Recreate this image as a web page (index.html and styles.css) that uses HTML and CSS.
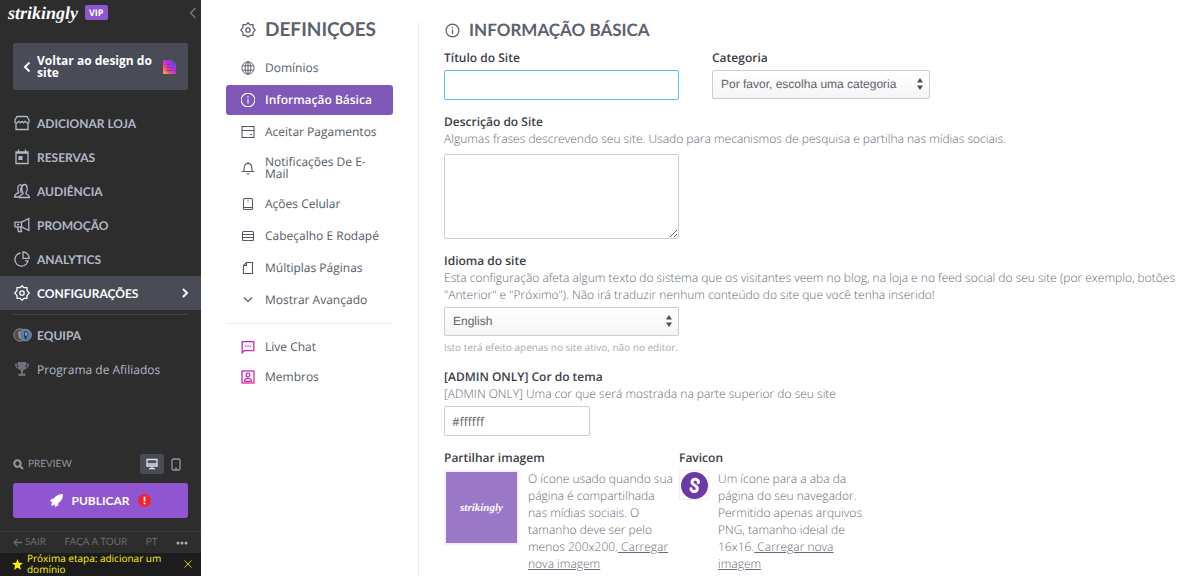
FILE: index.html
```html
<!DOCTYPE html>
<html lang="pt">
<head>
<meta charset="utf-8">
<meta name="viewport" content="width=device-width, initial-scale=1">
<title>Definições - Informação Básica</title>
<link rel="stylesheet" href="styles.css">
</head>
<body>
<svg class="defs" width="0" height="0" aria-hidden="true">
  <defs>
    <linearGradient id="pink" x1="0" y1="0" x2="1" y2="1"><stop offset="0" stop-color="#a32be0"/><stop offset="1" stop-color="#f02a8c"/></linearGradient>
    <linearGradient id="insta" x1="0" y1="1" x2="1" y2="0"><stop offset="0" stop-color="#ffb02e"/><stop offset=".35" stop-color="#f0418a"/><stop offset=".6" stop-color="#b32be8"/><stop offset="1" stop-color="#3f6be0"/></linearGradient>
    <symbol id="gear" viewBox="0 0 16 16"><path d="M8 .8 9.9 2.7 12.9 2.6 13.1 5.6 15.2 8 13.1 10.4 12.9 13.4 9.9 13.3 8 15.2 6.1 13.3 3.1 13.4 2.9 10.4.8 8 2.9 5.6 3.1 2.6 6.1 2.7Z"/><circle cx="8" cy="8" r="2.2"/></symbol>
    <symbol id="info" viewBox="0 0 16 16"><circle cx="8" cy="8" r="6.8"/><path d="M8 7v4.6M8 4.2v1.5"/></symbol>
  </defs>
</svg>
<div class="app">
  <aside class="sidebar">
    <header class="brand">
      <span class="logo">strikingly</span>
      <span class="vip">VIP</span>
      <button class="collapse" aria-label="Recolher menu"><svg class="icon" width="8" height="12" viewBox="0 0 8 12"><path d="M6.5 1 1.5 6l5 5"/></svg></button>
    </header>
    <button class="back">
      <svg class="icon bold" width="8" height="12" viewBox="0 0 8 12"><path d="M6.5 1.5 2 6l4.500 4.500"/></svg>
      <span class="back-text">Voltar ao design do site</span>
      <svg width="13" height="14" viewBox="0 0 13 14"><path d="M0 0h9l4 4v10H0z" fill="url(#insta)"/><path d="M3.500 4.500h3M3.500 7.500h6M3.500 10.500h6M9 0v4h4" fill="none" stroke="#5b4a9a"/></svg>
    </button>
    <nav class="menu">
      <a class="menu-item" href="#"><svg class="icon" width="16" height="16" viewBox="0 0 16 16"><path d="M3 1.500h10L15 5v2.300q-1.200 1.500-2.700 0l-1.300-1-1.500 1.500-1.500-1.500-1.500 1.500L5 6.300l-1.300 1Q2.200 8.800 1 7.300V5ZM2 8.500v6h12v-6"/></svg>ADICIONAR LOJA</a>
      <a class="menu-item" href="#"><svg class="icon" width="16" height="16" viewBox="0 0 16 16"><path d="M2 3h12v11.500H2zM2 4.200h12M4.500.5V3M11.500.5V3"/><path d="M4.500 7h4v4h-4z" fill="currentColor" stroke="none"/></svg>RESERVAS</a>
      <a class="menu-item" href="#"><svg class="icon" width="16" height="16" viewBox="0 0 16 16"><path d="M5.500 14.500h10q0-2.500-3.500-3.500v-1.500c1.500-1.500 2-8-1.500-8S7.500 8 9 9.500V11q-3.500 1-3.500 3.500ZM8 2.500C4.500.5 3 4 4.300 8.300L4.500 10Q.7 11 .5 14h5M8 3.500C6.300 5 6.300 8.500 7.500 10"/></svg>AUDIÊNCIA</a>
      <a class="menu-item" href="#"><svg class="icon" width="16" height="16" viewBox="0 0 16 16"><path d="M1 5.200h6.500v4.600H1zM7.500 5.200 14.800 1.500v12L7.500 9.800M3.500 10l1 4.500h3L6.500 10M3 7.500h2"/></svg>PROMOÇÃO</a>
      <a class="menu-item" href="#"><svg class="icon" width="16" height="16" viewBox="0 0 16 16"><path d="M6.500 2A6.600 6.600 0 1 0 14 9.800H11M9 1v6.300h6.200C15.200 3.800 12.500 1 9 1Z"/></svg>ANALYTICS</a>
      <a class="menu-item active" href="#"><svg class="icon" width="16" height="16"><use href="#gear"/></svg>CONFIGURAÇÕES<svg class="icon bold next" width="8" height="12" viewBox="0 0 8 12"><path d="M2 2l4 4-4 4"/></svg></a>
    </nav>
    <nav class="menu secondary">
      <a class="menu-item" href="#"><svg class="team" width="19" height="14" viewBox="0 0 19 14"><circle cx="7" cy="7" r="6.200" fill="#4f4a49" stroke="#8b919e"/><path d="M5 4.500Q7 2 9 5v4L6 11Z" fill="#b08b74"/><circle cx="12.500" cy="7" r="5.800" fill="#5478a8" stroke="#8b919e"/><path d="M11 4q2-2 4 1l-1 4-1 3-2-3Z" fill="#263f68"/><path d="M12 4.500h2v3h-2z" fill="#b39b98"/></svg>EQUIPA</a>
      <a class="menu-item plain" href="#"><svg width="16" height="16" viewBox="0 0 16 16"><path d="M4 1h8v1.500h3C15 6 13.300 7.500 11 8.300L9 10v2.500h2.500V15h-7v-2.500H7V10L5 8.300C2.700 7.500 1 6 1 2.500h3ZM2.400 3.700q.2 2 2 3L4 3.700ZM12 3.700l-.4 3q1.800-1 2-3Z" fill="#6c717c" fill-rule="evenodd"/></svg>Programa de Afiliados</a>
    </nav>
    <div class="sidebar-end">
      <div class="preview">
        <a class="preview-link" href="#"><svg class="icon bold" width="11" height="11" viewBox="0 0 11 11"><circle cx="4.500" cy="4.500" r="3.200"/><path d="M7 7l3 3"/></svg>PREVIEW</a>
        <button class="device on" aria-label="Computador"><svg class="icon" width="12" height="12" viewBox="0 0 12 12"><path d="M1 1.500h10v6.500H1zM1 6h10M6 8v2.500M3 10.700h6"/></svg></button>
        <button class="device" aria-label="Celular"><svg class="icon" width="10" height="13" viewBox="0 0 10 13"><rect x="1" y="1" width="8" height="11" rx="1.500"/><path d="M4 10.300h2"/></svg></button>
      </div>
      <button class="publish"><svg width="13" height="13" viewBox="0 0 13 13"><path d="M13 0C8.500 0 6 1.500 4 4.500L1.500 5 0 7.500l2.500.3L1 10.500 2 12l3-1.500.2 2.500L8 11.500l.5-2.700C11.500 7 13 4.500 13 0Z" fill="#fff"/></svg>PUBLICAR<svg width="13" height="13" viewBox="0 0 13 13" aria-label="Aviso"><circle cx="6.500" cy="6.500" r="6.500" fill="#f5222d"/><path d="M6.500 2.700v4.500M6.500 8.600v1.700" stroke="#fff" stroke-width="1.800"/></svg></button>
      <div class="links">
        <a href="#"><svg class="icon" width="9" height="9" viewBox="0 0 9 9"><path d="M9 4.500H1M4.500 1 1 4.500 4.500 8"/></svg>SAIR</a>
        <a href="#">FAÇA A TOUR</a>
        <a href="#">PT</a>
        <button aria-label="Mais"><svg width="12" height="4" viewBox="0 0 12 4" fill="#a9afbd"><circle cx="2" cy="2" r="1.500"/><circle cx="6" cy="2" r="1.500"/><circle cx="10" cy="2" r="1.500"/></svg></button>
      </div>
      <div class="tip">
        <svg width="11" height="11" viewBox="0 0 12 12"><path d="M6 0l1.600 4.200 4.400.2-3.400 2.800L9.700 12 6 9.300 2.300 12l1.100-4.800L0 4.400l4.400-.2Z" fill="#fff200"/></svg>
        <a href="#">Próxima etapa: adicionar um domínio</a>
        <button aria-label="Fechar"><svg width="8" height="8" viewBox="0 0 8 8"><path d="M.5.5l7 7M7.500.5l-7 7" stroke="#cfc51c"/></svg></button>
      </div>
    </div>
  </aside>

  <section class="settings">
    <h1 class="settings-title"><svg class="icon" width="16" height="16"><use href="#gear"/></svg>DEFINIÇOES</h1>
    <nav class="tabs">
      <a class="tab" href="#"><svg class="icon" width="14" height="14" viewBox="0 0 16 16"><circle cx="8" cy="8" r="7"/><ellipse cx="8" cy="8" rx="3.200" ry="7"/><path d="M8 1v14M1.500 5.500h13M1.500 10.500h13"/></svg>Domínios</a>
      <a class="tab current" href="#"><svg class="icon" width="14" height="14" viewBox="1 1 14 14"><use href="#info" width="16" height="16"/></svg>Informação Básica</a>
      <a class="tab" href="#"><svg class="icon" width="14" height="14" viewBox="0 0 14 14"><path d="M1 1.500h12v11H1zM1 5.500h12M9 9.500h2"/></svg>Aceitar Pagamentos</a>
      <a class="tab" href="#"><svg class="icon" width="14" height="14" viewBox="0 0 14 14"><path d="M.7 10.500h12.600M2.500 10.500Q3.300 9.500 3.300 6.500C3.300 1 10.700 1 10.700 6.500Q10.700 9.500 11.500 10.500M7 1v1.300M5.500 13h3"/></svg><span>Notificações De E-Mail</span></a>
      <a class="tab" href="#"><svg class="icon" width="14" height="14" viewBox="0 0 14 14"><rect x="2.500" y="1.500" width="9" height="11" rx="1"/><path d="M2.500 10.500h9M6.300 4h1.400"/></svg>Ações Celular</a>
      <a class="tab" href="#"><svg class="icon" width="14" height="14" viewBox="0 0 14 14"><rect x="1.500" y="2.500" width="11" height="9" rx="1"/><path d="M1.500 5.500h11M1.500 8.500h11"/></svg>Cabeçalho E Rodapé</a>
      <a class="tab" href="#"><svg class="icon" width="14" height="14" viewBox="0 0 14 14"><path d="M5.500 1.500h6v11h-9v-8ZM5.500 1.500v3h-3"/></svg>Múltiplas Páginas</a>
      <a class="tab" href="#"><svg class="icon" width="14" height="14" viewBox="0 0 14 14"><path d="M3 4.500l4 4 4-4"/></svg>Mostrar Avançado</a>
    </nav>
    <nav class="tabs extra">
      <a class="tab" href="#"><svg width="14" height="14" viewBox="0 0 14 14" fill="none" stroke="url(#pink)" stroke-width="1.300"><path d="M1.200 12.800V1.700h11.600v9H3.300ZM3.800 6.200h1.400M6.300 6.200h1.400M8.800 6.200h1.400"/></svg>Live Chat</a>
      <a class="tab" href="#"><svg width="14" height="14" viewBox="0 0 14 14" fill="none" stroke="url(#pink)" stroke-width="1.300"><rect x="1" y="1" width="12" height="12"/><circle cx="7" cy="5" r="1.900"/><path d="M3.500 11.300h7Q10.500 8.300 7 8.300T3.500 11.300Z"/></svg>Membros</a>
    </nav>
  </section>

  <main class="content">
    <h2 class="content-title"><svg class="icon" width="15" height="15"><use href="#info"/></svg>INFORMAÇÃO BÁSICA</h2>
    <form class="form">
      <div class="pair">
        <div class="field medium">
          <label for="title">Título do Site</label>
          <input class="focused" id="title" type="text">
        </div>
        <div class="field category">
          <label for="category">Categoria</label>
          <div class="select"><select id="category"><option>Por favor, escolha uma categoria</option></select><svg class="arrows" width="6" height="12" viewBox="0 0 6 12"><path d="M3 0l3 4.500H0zM3 12l3-4.500H0z"/></svg></div>
        </div>
      </div>
      <div class="field">
        <label for="description">Descrição do Site</label>
        <p class="hint">Algumas frases descrevendo seu site. Usado para mecanismos de pesquisa e partilha nas mídias sociais.</p>
        <textarea class="medium" id="description"></textarea>
      </div>
      <div class="field">
        <label for="language">Idioma do site</label>
        <p class="hint">Esta configuração afeta algum texto do sistema que os visitantes veem no blog, na loja e no feed social do seu site (por exemplo, botões "Anterior" e "Próximo"). Não irá traduzir nenhum conteúdo do site que você tenha inserido!</p>
        <div class="select medium"><select id="language"><option>English</option></select><svg class="arrows" width="6" height="12" viewBox="0 0 6 12"><path d="M3 0l3 4.500H0zM3 12l3-4.500H0z"/></svg></div>
        <p class="note">Isto terá efeito apenas no site ativo, não no editor.</p>
      </div>
      <div class="field">
        <label for="color">[ADMIN ONLY] Cor do tema</label>
        <p class="hint">[ADMIN ONLY] Uma cor que será mostrada na parte superior do seu site</p>
        <input class="short" id="color" type="text" value="#ffffff">
      </div>
      <div class="images">
        <section class="field medium">
          <h3>Partilhar imagem</h3>
          <div class="upload">
            <div class="share"><span class="logo">strikingly</span></div>
            <p class="hint">O ícone usado quando sua página é compartilhada nas mídias sociais. O tamanho deve ser pelo menos 200x200.<a href="#"> Carregar nova imagem</a></p>
          </div>
        </section>
        <section class="field favicon-field">
          <h3>Favicon</h3>
          <div class="upload">
            <div class="favicon"><svg width="27" height="27" viewBox="0 0 27 27"><circle cx="13.500" cy="13.500" r="13.500" fill="#6b3aa8"/><path d="M17.300 10.700C18.500 6.500 11 6 11 10c0 3.500 5.300 3 5.300 6.500 0 4-6.500 3.800-6.300.2" fill="none" stroke="#fff" stroke-width="3" stroke-linecap="round"/></svg></div>
            <p class="hint">Um ícone para a aba da página do seu navegador. Permitido apenas arquivos PNG, tamanho ideial de 16x16.<a href="#"> Carregar nova imagem</a></p>
          </div>
        </section>
      </div>
    </form>
  </main>
</div>
</body>
</html>
```

FILE: styles.css
```css
* { box-sizing: border-box; }

body {
  margin: 0;
  background: #fff;
  color: #555b66;
  font: 12px/17px "Open Sans", sans-serif;
  text-rendering: geometricPrecision;
}

h1, h2, h3, p { margin: 0; }
a { color: inherit; text-decoration: none; }
button { border: 0; padding: 0; background: none; color: inherit; font: inherit; display: flex; align-items: center; }
input, textarea, select { text-rendering: inherit; }
svg { flex: none; }
.defs { position: absolute; }

.icon { fill: none; stroke: currentColor; stroke-width: 1.3; }
.icon.bold { stroke-width: 2; }

.app {
  display: grid;
  grid-template-columns: 201px 218px minmax(0, 1fr);
  min-height: 100vh;
}

/* Sidebar */
.sidebar {
  display: flex;
  flex-direction: column;
  background: #2d2d2d;
  color: #b1b8c8;
}

.brand { display: flex; align-items: center; gap: 7px; height: 25px; padding: 0 4px 0 8px; }
.logo { color: #fff; font: italic 700 18px/20px "Liberation Serif", serif; }
.vip { padding: 0 4px; border-radius: 2px; background: #8f56d2; color: #fff; font: 700 9px/15px "Open Sans", sans-serif; }
.collapse { margin-left: auto; color: #707a91; }

.back {
  gap: 6px;
  margin: 18px 13px 16px;
  height: 47px;
  padding: 0 12px 0 10px;
  border-radius: 2px;
  background: #494c57;
  color: #fff;
  font-weight: 700;
  line-height: 12px;
  text-align: left;
}
.back-text { flex: 1; }

.menu { display: flex; flex-direction: column; }
.menu-item {
  display: flex;
  align-items: center;
  gap: 7px;
  height: 34px;
  padding: 0 12px 0 14px;
  font: 700 12px/17px Lato, sans-serif;
}
.menu-item.active { background: #494c57; color: #fff; }
.menu-item .next { margin-left: auto; }
.menu-item.plain { font: 400 12px/17px "Open Sans", sans-serif; }
.secondary { margin-top: 4px; padding-top: 4px; }
.secondary::before { content: ""; height: 1px; margin: -4px 13px 3px; background: #41444c; }
.team { margin: 0 -2px 0 -1px; }

.sidebar-end { display: flex; flex-direction: column; margin-top: auto; }
.preview { display: flex; align-items: center; padding: 0 13px; color: #9298a5; }
.preview-link { display: flex; align-items: center; gap: 4px; margin-right: auto; font: 400 10px/20px Lato, sans-serif; }
.device { justify-content: center; width: 24px; height: 20px; border-radius: 2px; }
.device.on { background: #494c57; color: #dfe2ea; }

.publish {
  justify-content: center;
  gap: 8px;
  height: 35px;
  margin: 9px 13px 13px;
  border-radius: 3px;
  background: #9055d0;
  color: #fff;
  font: 700 12px/17px Lato, sans-serif;
}

.links {
  display: flex;
  align-items: center;
  justify-content: space-between;
  height: 22px;
  padding: 0 13px;
  border-top: 1px solid #3a3a3c;
  color: #666a74;
  font: 400 10px/17px Lato, sans-serif;
}
.links a { display: flex; align-items: center; gap: 3px; }

.tip {
  display: flex;
  align-items: center;
  gap: 4px;
  padding: 0 9px 1px 12px;
  background: #1c1c1c;
  color: #fff200;
  font-size: 10px;
  line-height: 11px;
}
.tip a { flex: 1; }

/* Settings navigation */
.settings { margin-top: 22px; padding: 0 25px; border-right: 1px solid #ececee; }
.settings-title {
  display: flex;
  align-items: center;
  gap: 9px;
  height: 16px;
  margin-bottom: 15px;
  padding-left: 14px;
  color: #5c616c;
  font: 700 19px/16px Lato, sans-serif;
}
.tabs { display: flex; flex-direction: column; gap: 2px; }
.tab {
  display: flex;
  align-items: center;
  gap: 10px;
  min-height: 30px;
  padding: 0 10px 0 15px;
  border-radius: 3px;
  font-weight: 500;
  line-height: 12px;
}
.tab .icon { stroke-width: 1.1; }
.tab:nth-child(4) { min-height: 38px; }
.tab.current { background: #8058b8; color: #fff; font-weight: 600; }
.extra { gap: 0; margin-top: 8px; padding-top: 8px; border-top: 1px solid #ececee; }

/* Form */
.content { padding: 20px 12px 0 25px; }
.content-title {
  display: flex;
  align-items: center;
  gap: 9px;
  height: 20px;
  margin-bottom: 9px;
  padding-left: 1px;
  color: #5c616c;
  font: 700 17px/20px Lato, sans-serif;
}
.form { display: flex; flex-direction: column; gap: 13px; }
.pair { display: flex; gap: 33px; }
.field { display: flex; flex-direction: column; align-items: flex-start; }
.field label, .field h3 { margin-bottom: 4px; color: #3a3e48; font-weight: 600; font-size: 12px; line-height: 17px; }
.field label:has(+ .hint) { margin-bottom: 0; }
.hint { margin-bottom: 4px; color: #666b77; font-weight: 300; }
.hint a { text-decoration: underline; }
.note { margin-top: 4px; color: #a9acb4; font-size: 10px; line-height: 15px; }

.medium { width: 235px; }
.category { width: 218px; }
.field input, .field textarea {
  border: 1px solid #ccced2;
  border-radius: 2px;
  background: #fff;
  color: #5f646e;
  font: 12px/17px "Open Sans", sans-serif;
}
.field input { width: 100%; height: 30px; padding: 0 7px; }
.field .short { width: 146px; }
.field .focused { border-color: #5cbcea; }
.field textarea { height: 85px; margin-top: 3px; }

.select { position: relative; max-width: 100%; }
.select:not(.medium) { width: 100%; }
.select select {
  display: block;
  width: 100%;
  height: 29px;
  padding: 0 8px;
  appearance: none;
  border: 1px solid #ccced2;
  border-radius: 2px;
  background: linear-gradient(#fff, #f5f5f6);
  color: #5f646e;
  font: 12px/17px "Liberation Sans", Arial, sans-serif;
}
.arrows { position: absolute; top: 8px; right: 7px; fill: #4a4e58; pointer-events: none; }

.images { display: flex; }
.upload { display: flex; gap: 9px; }
.upload .hint { margin: 0; padding-right: 3px; }
.share {
  flex: none;
  display: grid;
  place-items: center;
  width: 75px;
  height: 75px;
  border: 2px solid #f3f1f6;
  background: #9b77c7;
}
.share .logo { font-size: 11px; }
.favicon-field { width: 190px; }
.favicon { flex: none; display: grid; place-items: center; width: 30px; height: 30px; border: 1px solid #f0f0f2; }
```
